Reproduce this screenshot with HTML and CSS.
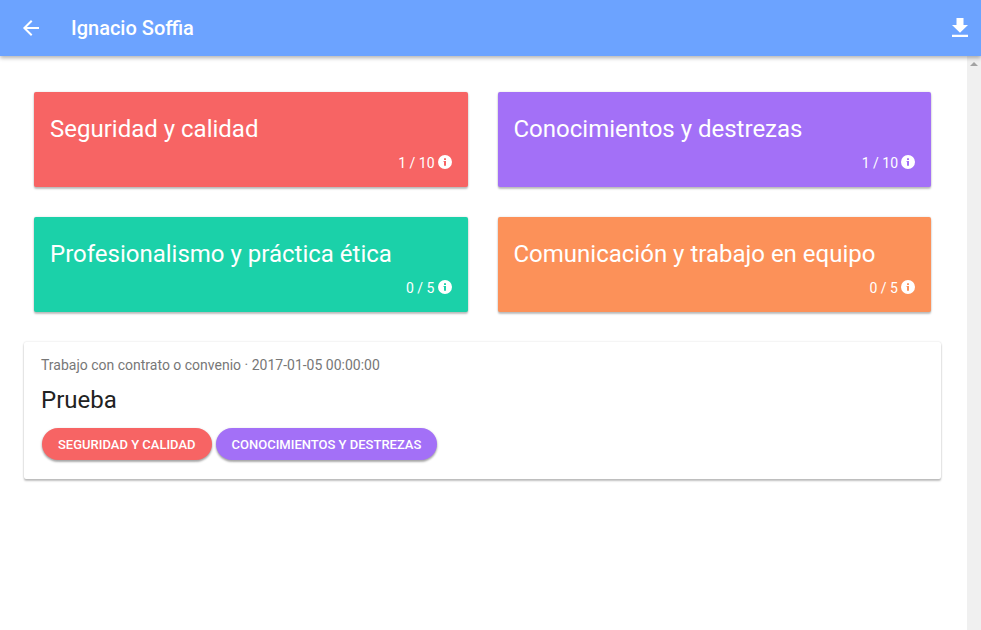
FILE: index.html
```html
<!DOCTYPE html>
<html lang="es">
<head>
<meta charset="utf-8">
<meta name="viewport" content="width=device-width, initial-scale=1">
<title>Ignacio Soffia</title>
<link rel="stylesheet" href="styles.css">
</head>
<body>
<svg class="symbols" aria-hidden="true">
  <symbol id="info" viewBox="0 0 14 14">
    <path fill-rule="evenodd" d="M7 0a7 7 0 1 0 0 14A7 7 0 0 0 7 0zM6 3.300h2v1.700H6zM5.600 6H8v4.700H6V7h-.400z"/>
  </symbol>
</svg>
<header class="toolbar">
  <button class="icon-button" type="button" aria-label="Volver">
    <svg class="icon" viewBox="0 0 512 512"><path d="M427 234.625H167.296l119.702-119.702L256 85 85 256l171 171 29.922-29.924-118.626-119.701H427v-42.75z"/></svg>
  </button>
  <h1 class="toolbar-title">Ignacio Soffia</h1>
  <button class="icon-button" type="button" aria-label="Descargar">
    <svg class="icon" viewBox="0 0 24 24"><path d="M8.500 2h7v7H20l-8 7.800L4 9h4.500zM4 18.800h16V21H4z"/></svg>
  </button>
</header>
<div class="viewport">
  <main class="content">
    <section class="areas">
      <article class="area red">
        <h2 class="title">Seguridad y calidad</h2>
        <p class="score">1 / 10 <svg class="info"><use href="#info"/></svg></p>
      </article>
      <article class="area purple">
        <h2 class="title">Conocimientos y destrezas</h2>
        <p class="score">1 / 10 <svg class="info"><use href="#info"/></svg></p>
      </article>
      <article class="area green">
        <h2 class="title">Profesionalismo y práctica ética</h2>
        <p class="score">0 / 5 <svg class="info"><use href="#info"/></svg></p>
      </article>
      <article class="area orange">
        <h2 class="title">Comunicación y trabajo en equipo</h2>
        <p class="score">0 / 5 <svg class="info"><use href="#info"/></svg></p>
      </article>
    </section>
    <article class="entry">
      <p class="meta">Trabajo con contrato o convenio · 2017-01-05 00:00:00</p>
      <h2 class="title">Prueba</h2>
      <div class="tags">
        <button class="tag red" type="button">Seguridad y calidad</button>
        <button class="tag purple" type="button">Conocimientos y destrezas</button>
      </div>
    </article>
  </main>
  <div class="scroll-track" aria-hidden="true">
    <svg class="scroll-arrow" viewBox="0 0 8 4"><path d="M4 0l4 4H0z"/></svg>
  </div>
</div>
</body>
</html>
```
FILE: styles.css
```css
* {
  box-sizing: border-box;
}

body {
  margin: 0;
  min-height: 100vh;
  display: flex;
  flex-direction: column;
  background: #fff;
  color: #222;
  font-family: Roboto, sans-serif;
  font-size: 14px;
}

h1, h2, p {
  margin: 0;
}

button {
  border: 0;
  font-family: inherit;
  color: #fff;
  cursor: pointer;
}

.symbols {
  position: absolute;
  width: 0;
  height: 0;
}

.toolbar {
  position: relative;
  z-index: 1;
  display: flex;
  align-items: center;
  height: 56px;
  padding: 0 9px 0 19px;
  background: #6ca3ff;
  box-shadow: 0 2px 4px rgba(0, 0, 0, 0.3);
}

.toolbar-title {
  flex: 1;
  padding-left: 28px;
  color: #fff;
  font-size: 20px;
  font-weight: 500;
  line-height: 24px;
}

.icon-button {
  display: flex;
  padding: 0;
  background: none;
}

.icon {
  width: 24px;
  height: 24px;
  fill: #fff;
}

.viewport {
  flex: 1;
  display: flex;
}

.content {
  flex: 1;
  padding: 36px 26px 36px 24px;
}

.areas {
  display: grid;
  grid-template-columns: 1fr 1fr;
  gap: 30px;
  padding: 0 10px;
  margin-bottom: 30px;
}

.area,
.entry {
  border-radius: 2px;
  box-shadow: 0 2px 2px rgba(0, 0, 0, 0.24), 0 0 2px rgba(0, 0, 0, 0.16);
}

.area {
  padding: 22px 16px 13px;
  color: #fff;
}

.title {
  font-size: 24px;
  font-weight: 400;
  line-height: 30px;
}

.score {
  display: flex;
  justify-content: flex-end;
  align-items: center;
  gap: 3px;
  margin-top: 8px;
  line-height: 22px;
}

.info {
  width: 14px;
  height: 14px;
  margin-bottom: 3px;
  fill: #fff;
}

.red {
  background: #f76464;
}

.purple {
  background: #a370f7;
}

.green {
  background: #1bd1a9;
}

.orange {
  background: #fc9159;
}

.entry {
  padding: 13px 17px 19px;
  background: #fff;
}

.meta {
  margin-bottom: 10px;
  color: #777;
  line-height: 20px;
}

.tags {
  display: flex;
  flex-wrap: wrap;
  gap: 4px;
  margin-top: 13px;
  padding: 0 1px;
}

.tag {
  height: 32px;
  padding: 0 16px;
  border-radius: 16px;
  box-shadow: 0 2px 2px rgba(0, 0, 0, 0.24), 0 1px 3px rgba(0, 0, 0, 0.2);
  font-size: 13px;
  font-weight: 500;
  text-transform: uppercase;
}

.scroll-track {
  width: 14px;
  padding-top: 6px;
  background: #f0f0f0;
}

.scroll-arrow {
  display: block;
  width: 8px;
  height: 4px;
  margin: 0 auto;
  fill: #a3a3a3;
}
```
